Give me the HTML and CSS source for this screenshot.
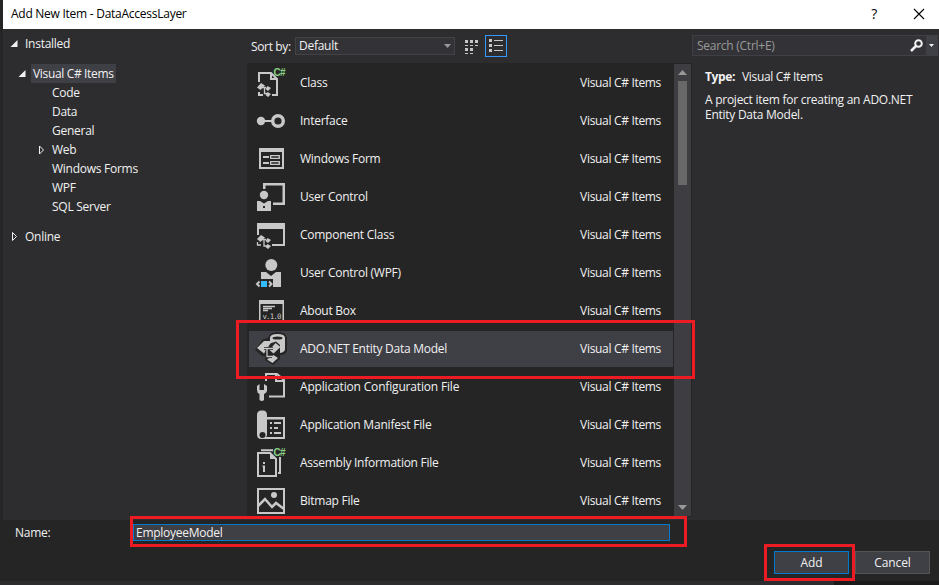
FILE: index.html
```html
<!DOCTYPE html>
<html lang="en">
<head>
  <meta charset="UTF-8">
  <title>Add New Item - DataAccessLayer</title>
  <link rel="stylesheet" href="styles.css">
</head>
<body>
  <div class="dialog">
    <header class="titlebar">
      <span class="title">Add New Item - DataAccessLayer</span>
      <span class="help">?</span>
      <svg class="close" width="12" height="12" viewBox="0 0 12 12"><path d="M1 1l10 10M11 1L1 11" stroke="#000" stroke-width="1.1"/></svg>
    </header>

    <main class="content">
      <nav class="tree">
        <div class="node root"><svg class="arrow" viewBox="0 0 8 10"><path d="M7.500 1v7H.500z" fill="#f1f1f1"/></svg><span>Installed</span></div>
        <div class="node category"><svg class="arrow" viewBox="0 0 8 10"><path d="M7.500 1v7H.500z" fill="#f1f1f1"/></svg><span class="current">Visual C# Items</span></div>
        <div class="node leaf"><span>Code</span></div>
        <div class="node leaf"><span>Data</span></div>
        <div class="node leaf"><span>General</span></div>
        <div class="node leaf"><svg class="arrow" viewBox="0 0 8 10"><path d="M2.500 1v8l4-4z" fill="none" stroke="#f1f1f1"/></svg><span>Web</span></div>
        <div class="node leaf"><span>Windows Forms</span></div>
        <div class="node leaf"><span>WPF</span></div>
        <div class="node leaf"><span>SQL Server</span></div>
        <div class="node root online"><svg class="arrow" viewBox="0 0 8 10"><path d="M2.500 0.500v8l4-4z" fill="none" stroke="#f1f1f1"/></svg><span>Online</span></div>
      </nav>

      <section class="templates">
        <div class="toolbar">
          <label>Sort by:</label>
          <div class="select"><span>Default</span><svg width="7" height="4" viewBox="0 0 7 4"><path d="M0 0h7L3.500 4z" fill="#999"/></svg></div>
          <svg class="grid-view" width="14" height="15" viewBox="0 0 14 15" fill="#c8c8c8"><path d="M0 1h3v3H0zM5 1h3v3H5zM10 1h3v3h-3zM0 9h3v3H0zM5 9h3v3H5zM0 6h3v1H0zM5 6h3v1H5zM10 6h3v1h-3zM0 14h3v1H0zM5 14h3v1H5z"/></svg>
          <div class="list-view"><svg width="14" height="14" viewBox="0 0 14 14" fill="#c8c8c8"><path d="M0 0h3v3H0zM0 5h3v3H0zM0 10h3v3H0zM5 1h9v1H5zM5 6h9v1H5zM5 11h9v1H5z"/></svg></div>
        </div>
        <div class="list-box">
          <ul class="list">
            <li>
              <svg viewBox="0 0 32 38"><path d="M4 18V9h12l6 6v16h-5M4 28v3h4M16 9v6h6" class="line"/><path d="M6 19l4 2.500-4.500 4.500-3.500-2.500zM12.500 22l3.500 2-3 3-2.500-2zM12.500 28l3.500 2-3 3-2.500-2z"/><path d="M7 23.500h4M9.500 23.500v6H12" class="thin"/><text x="18.500" y="12" class="cs">C#</text></svg>
              <span>Class</span><em>Visual C# Items</em>
            </li>
            <li>
              <svg viewBox="0 0 32 38"><circle cx="6" cy="19" r="4.200"/><path d="M9 19h8" class="line"/><circle cx="23" cy="19" r="5.300" class="ring"/></svg>
              <span>Interface</span><em>Visual C# Items</em>
            </li>
            <li>
              <svg viewBox="0 0 32 38"><path d="M4 8h25v21H4zM6 12v15h21V12z" fill-rule="evenodd"/><path d="M8 17h6M8 23h6" class="line"/><path d="M15.700 15.700h8.600v2.600h-8.600zM15.700 21.700h8.600v2.600h-8.600z" class="thin"/></svg>
              <span>Windows Form</span><em>Visual C# Items</em>
            </li>
            <li>
              <svg viewBox="0 0 32 38"><path d="M8 11V5h22v22H18v-2.500h9.500v-17h-17V11z"/><circle cx="9" cy="17" r="4.200"/><path d="M2 23h3l4 2.500L13 23h3v10H2zM8 28v2h2v-2z" fill-rule="evenodd"/></svg>
              <span>User Control</span><em>Visual C# Items</em>
            </li>
            <li>
              <svg viewBox="0 0 32 38"><path d="M2 7h28v23H17v-2h11V13H4v6H2z"/><path d="M6 19l4 2.500-4.500 4.500-3.500-3zM12.500 22l3.500 2-3 3-2.500-2zM12.500 28l3.500 2-3 3-2.500-2z"/><path d="M2.500 26v3H6M7 23.500h4M9 24v6h3" class="thin"/></svg>
              <span>Component Class</span><em>Visual C# Items</em>
            </li>
            <li>
              <svg viewBox="0 0 32 38"><circle cx="16.300" cy="11" r="6"/><path d="M6 18h5l5 4 5-4h5v15h-8v-8H6z"/><path d="M6 27h6v6H6z" class="blue"/><path d="M4.500 27.500L2 30l2.500 2.500M14 27.500l2.500 2.500-2.500 2.500" class="line"/></svg>
              <span>User Control (WPF)</span><em>Visual C# Items</em>
            </li>
            <li>
              <svg viewBox="0 0 32 38"><path d="M4 8h25v22H4zM5.500 12v16.500h22V12z" fill-rule="evenodd"/><path d="M8 14.500h12M8 16.500h9M8 18.500h5" class="thin"/><text x="7.500" y="26.500" class="ver">v.1.0</text></svg>
              <span>About Box</span><em>Visual C# Items</em>
            </li>
            <li class="selected">
              <svg viewBox="0 0 32 38"><path d="M13 8q1-6 9.500-6T32 8v13q-1 4-7 4v4l-7 6-8-5 1-4H7l-7-6L8 9z" class="halo"/><path d="M15 8q0-4 7.500-4T30 8v11q0 3-5 4V15l-4-3.500-6 2z"/><ellipse cx="22.500" cy="8" rx="5" ry="1.600" class="hole"/><path d="M9 11h6l1 1.500L9 23.500l-7-5.500zM20.500 13l5 4-7 6.500-4-3.500zM18.500 25l4.500 3-5.500 5-5.500-3.500z"/><path d="M9 18.500h9M12 18v8.500h5" class="halo-line"/><path d="M9 18.500h9M12 18v8.500h5" class="thin"/></svg>
              <span>ADO.NET Entity Data Model</span><em>Visual C# Items</em>
            </li>
            <li>
              <svg viewBox="0 0 32 38"><path d="M11 13V6h11l7 6v16.500H14M21 6v7h8" class="line"/><path d="M2 18l2.500-2v6h4.500v-6l3 2v5q-.500 2-3 3v6q-2 2-4.500 0v-6Q2 25 2 22z"/></svg>
              <span class="config">Application Configuration File</span><em>Visual C# Items</em>
            </li>
            <li>
              <svg viewBox="0 0 32 38"><path d="M2 9q0-4.500 4.500-4.500H8q4 0 4 4.500v2h18v22H6.500Q2 33 2 28.500zM12 13.500V29q0 2-1.500 2H28V13.500z" fill-rule="evenodd"/><circle cx="7.500" cy="29" r="3" class="hole"/><path d="M15 17h2M19 17h7M15 22h2M19 22h4M15 27h2M19 27h7" class="line"/></svg>
              <span class="manifest">Application Manifest File</span><em>Visual C# Items</em>
            </li>
            <li>
              <svg viewBox="0 0 32 38"><path d="M3 9h12l6 6v17H3zM6 6.200h12M25 13v16h-2" class="line"/><path d="M15 9l6 6h-6z"/><path d="M8 18h2v2H8zM7.500 21.500H10V28H8v-5h-.500z"/><text x="18.500" y="12" class="cs">C#</text></svg>
              <span>Assembly Information File</span><em>Visual C# Items</em>
            </li>
            <li>
              <svg viewBox="0 0 32 38"><path d="M3 7h26v24H3z" class="line"/><path d="M3 24l7-7 7 8 4-4 8 6" class="mountain"/><circle cx="19" cy="13" r="3"/></svg>
              <span>Bitmap File</span><em>Visual C# Items</em>
            </li>
          </ul>
          <div class="scrollbar">
            <svg width="9" height="5" viewBox="0 0 9 5"><path d="M0 5h9L4.500 0z" fill="#999"/></svg>
            <div class="thumb"></div>
            <svg class="down" width="9" height="5" viewBox="0 0 9 5"><path d="M0 0h9L4.500 5z" fill="#999"/></svg>
          </div>
        </div>
      </section>

      <aside class="details">
        <div class="search">
          <span>Search (Ctrl+E)</span>
          <svg width="13" height="13" viewBox="0 0 13 13"><circle cx="8.500" cy="4.500" r="3.300" fill="none" stroke="#f1f1f1" stroke-width="2"/><path d="M6 7L1 12" stroke="#f1f1f1" stroke-width="2.500"/></svg>
          <div class="search-menu"><svg width="5" height="3" viewBox="0 0 5 3"><path d="M0 0h5L2.500 3z" fill="#f1f1f1"/></svg></div>
        </div>
        <p class="type"><b>Type:</b><span>Visual C# Items</span></p>
        <p class="description">A project item for creating an ADO.NET<br>Entity Data Model.</p>
      </aside>
    </main>

    <footer class="footer">
      <div class="name-row">
        <label for="name">Name:</label>
        <input id="name" type="text" value="EmployeeModel">
      </div>
      <div class="buttons">
        <button class="primary">Add</button>
        <button>Cancel</button>
      </div>
    </footer>
    <div class="bottom-edge"></div>

    <div class="mark mark-item"></div>
    <div class="mark mark-name"></div>
    <div class="mark mark-add"></div>
  </div>
</body>
</html>
```
FILE: styles.css
```css
* {
  box-sizing: border-box;
}
body {
  margin: 0;
  font-family: "Open Sans", "Noto Sans", sans-serif;
  font-size: 12px;
  line-height: 16px;
  letter-spacing: -0.26px;
  color: #f1f1f1;
  background: #252526;
  overflow: hidden;
}
svg {
  display: block;
  flex: none;
}
.dialog {
  position: relative;
  display: flex;
  flex-direction: column;
  width: 939px;
  height: 585px;
  padding-left: 3px;
  white-space: nowrap;
}

/* title bar */
.titlebar {
  display: flex;
  align-items: center;
  height: 29px;
  padding: 0 14px 2px 8px;
  background: #fff;
  color: #000;
}
.title {
  flex: 1;
}
.help {
  margin-right: 36px;
  font-size: 14px;
}

.content {
  display: flex;
  height: 491px;
  background: #2d2d30;
}

/* category tree */
.tree {
  width: 244px;
  padding-top: 5px;
}
.node {
  display: flex;
  align-items: center;
  height: 19px;
}
.arrow {
  width: 8px;
  height: 10px;
  margin-right: 7px;
}
.root {
  padding-left: 7px;
}
.category {
  margin-top: 11px;
  padding-left: 15px;
}
.category .arrow {
  margin-right: 5px;
}
.current {
  width: 85px;
  height: 19px;
  padding: 2px 2px 0;
  background: #3f3f46;
  letter-spacing: -0.34px;
}
.leaf {
  padding-left: 49px;
}
.leaf .arrow {
  margin-left: -15px;
}
.online {
  margin-top: 11px;
}

/* template list */
.templates {
  width: 445px;
}
.toolbar {
  display: flex;
  align-items: center;
  height: 34px;
  padding-left: 4px;
}
.toolbar label {
  width: 44px;
  padding-top: 1px;
  letter-spacing: -0.35px;
}
.select {
  display: flex;
  align-items: center;
  justify-content: space-between;
  width: 160px;
  height: 18px;
  padding: 0 3px;
  background: #333337;
  border: 1px solid #434346;
}
.grid-view {
  margin: 0 6px 0 10px;
}
.list-view {
  width: 22px;
  height: 22px;
  padding: 3px;
  border: 1px solid #3399ff;
}
.list-box {
  display: flex;
  height: 454px;
  padding-top: 1px;
  background: #252526;
}
.list {
  width: 427px;
  height: 452px;
  margin: 0;
  padding: 0;
  list-style: none;
  overflow: hidden;
}
.list li {
  display: flex;
  align-items: center;
  height: 38px;
  padding: 0 13px 0 8px;
}
.list li.selected {
  background: linear-gradient(#3f3f46, #3f3f46) 2px 1px / 424px 36px no-repeat;
}
.list svg {
  width: 32px;
  height: 38px;
  margin-right: 13px;
  fill: #c8c8c8;
}
.list span {
  flex: 1;
}
.list .config {
  letter-spacing: -0.17px;
}
.list .manifest {
  letter-spacing: -0.2px;
}
.list em {
  font-style: normal;
  letter-spacing: -0.32px;
}
.list svg .line {
  fill: none;
  stroke: #c8c8c8;
  stroke-width: 2;
}
.list svg .thin {
  fill: none;
  stroke: #c8c8c8;
  stroke-width: 1.3;
}
.list svg .ring {
  fill: none;
  stroke: #c8c8c8;
  stroke-width: 3.4;
}
.list svg .mountain {
  fill: none;
  stroke: #c8c8c8;
  stroke-width: 2.5;
}
.list svg .hole,
.list svg .halo {
  fill: #252526;
}
.list svg .halo-line {
  fill: none;
  stroke: #252526;
  stroke-width: 3;
}
.list svg .blue {
  fill: #3bf;
}
.cs {
  fill: #89d185;
  font-family: "Liberation Sans", sans-serif;
  font-size: 10px;
  font-weight: bold;
  letter-spacing: -0.8px;
}
.ver {
  font-family: "DejaVu Sans Mono", monospace;
  font-size: 7.5px;
  letter-spacing: -0.9px;
}

.scrollbar {
  display: flex;
  flex-direction: column;
  align-items: center;
  width: 17px;
  height: 452px;
  padding: 6px 0 6px;
  background: #3e3e42;
}
.thumb {
  width: 9px;
  height: 104px;
  margin-top: 6px;
  background: #686868;
}
.down {
  margin-top: auto;
}

/* right column */
.details {
  flex: 1;
  padding-top: 6px;
}
.search {
  display: flex;
  align-items: center;
  width: 246px;
  height: 21px;
  padding-left: 4px;
  background: #333337;
  border: 1px solid #3f3f46;
  color: #999;
}
.search span {
  flex: 1;
}
.search-menu {
  width: 11px;
  height: 19px;
  margin-left: 3px;
  padding: 8px 3px;
  background: #3f3f46;
}
.type {
  display: flex;
  margin: 13px 0 0 13px;
  letter-spacing: -0.34px;
}
.type b {
  width: 37px;
}
.description {
  margin: 7px 0 0 13px;
  line-height: 15px;
}

/* name field and buttons */
.footer {
  height: 61px;
  padding-top: 4px;
}
.name-row {
  display: flex;
  align-items: center;
  padding-left: 12px;
}
.name-row label {
  width: 118px;
}
.name-row input {
  width: 537px;
  height: 17px;
  padding: 0 2px;
  background: #3f3f46;
  border: 1px solid #007acc;
  color: #f1f1f1;
  font: inherit;
  letter-spacing: inherit;
  outline: none;
}
.buttons {
  display: flex;
  justify-content: flex-end;
  gap: 6px;
  padding: 10px 9px 0 0;
}
.buttons button {
  width: 75px;
  height: 23px;
  padding: 0;
  background: #3f3f46;
  border: 1px solid #555;
  color: #f1f1f1;
  font: inherit;
  letter-spacing: -0.1px;
}
.buttons .primary {
  border-color: #007acc;
}
.bottom-edge {
  height: 4px;
  margin-left: -3px;
  background: linear-gradient(to right, #2d2d30 834px, #1b1b1c 834px);
}

/* red highlight frames */
.mark {
  position: absolute;
  border: 3px solid #ed1c24;
}
.mark-item {
  left: 236px;
  top: 320px;
  width: 459px;
  height: 59px;
}
.mark-name {
  left: 130px;
  top: 516px;
  width: 557px;
  height: 31px;
}
.mark-add {
  left: 764px;
  top: 544px;
  width: 91px;
  height: 37px;
}
```
